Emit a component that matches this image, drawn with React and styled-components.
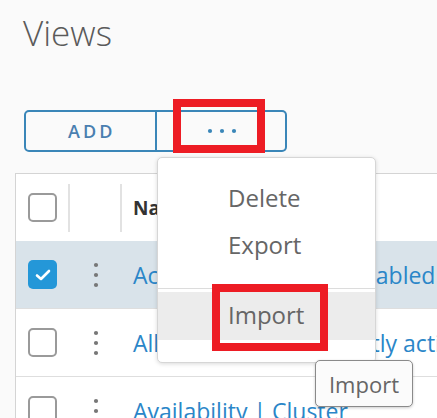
import React from 'react'
import styled, { createGlobalStyle } from 'styled-components'

const GlobalStyle = createGlobalStyle`
  html, body {
    margin: 0;
    padding: 0;
    background: #fafafa;
    overflow: hidden;
  }
  body {
    font-family: "Open Sans", "Liberation Sans", sans-serif;
  }
`

const rows = [
  { name: 'Accounts | Login is Disabled', selected: true },
  { name: 'All Datastores | Recently active', selected: false },
  { name: 'Availability | Cluster', selected: false },
]

const HDots = () => (
  <svg width="30" height="6" viewBox="0 0 30 6">
    <circle cx="3" cy="3" r="2.1" fill="#3a86b8" />
    <circle cx="15" cy="3" r="2.1" fill="#3a86b8" />
    <circle cx="27" cy="3" r="2.1" fill="#3a86b8" />
  </svg>
)

const VDots = () => (
  <svg width="6" height="26" viewBox="0 0 6 26">
    <circle cx="3" cy="3" r="2.1" fill="#777" />
    <circle cx="3" cy="13" r="2.1" fill="#777" />
    <circle cx="3" cy="23" r="2.1" fill="#777" />
  </svg>
)

const Check = () => (
  <svg width="16" height="12" viewBox="0 0 16 12">
    <path d="M2 6.5 L6 10 L14 2" fill="none" stroke="#fff" strokeWidth="2.6" strokeLinecap="round" strokeLinejoin="round" />
  </svg>
)

const App = () => {
  return (
    <Page>
      <GlobalStyle />
      <Title>Views</Title>
      <ButtonGroup>
        <GroupButton>ADD</GroupButton>
        <GroupButton>
          <HDots />
        </GroupButton>
      </ButtonGroup>

      <Table>
        <HeaderRow>
          <CheckCell>
            <Box />
          </CheckCell>
          <DotCell divided />
          <NameCell>
            <HeaderText>Name</HeaderText>
          </NameCell>
        </HeaderRow>
        {rows.map((r) => (
          <Row key={r.name} selected={r.selected}>
            <CheckCell>
              <Box checked={r.selected}>{r.selected && <Check />}</Box>
            </CheckCell>
            <DotCell>
              <VDots />
            </DotCell>
            <NameCell>
              <Link>{r.name}</Link>
            </NameCell>
          </Row>
        ))}
      </Table>

      <Menu>
        <MenuItem>Delete</MenuItem>
        <MenuItem>Export</MenuItem>
        <Divider />
        <MenuItem hovered>Import</MenuItem>
      </Menu>

      <Tooltip>Import</Tooltip>

      <Highlight style={{ left: 173, top: 99, width: 92, height: 54 }} />
      <Highlight style={{ left: 212, top: 284, width: 116, height: 67 }} />
    </Page>
  )
}

const Page = styled.div`
  position: relative;
  width: 437px;
  height: 418px;
  padding-left: 15px;
  box-sizing: border-box;
  overflow: hidden;
`

const Title = styled.h1`
  margin: 15px 0 0 8px;
  font-size: 35px;
  line-height: 35px;
  font-weight: 300;
  color: #5a5a5a;
`

const ButtonGroup = styled.div`
  display: flex;
  margin: 60px 0 0 9px;
  width: 263px;
  height: 42px;
`

const GroupButton = styled.button`
  flex: 1;
  display: flex;
  align-items: center;
  justify-content: center;
  background: transparent;
  border: 2px solid #3a86b8;
  font-family: "Open Sans", "Liberation Sans", sans-serif;
  font-size: 18px;
  font-weight: 600;
  letter-spacing: 3px;
  color: #4a7fb0;
  padding: 0 0 0 3px;
  &:first-child {
    border-radius: 5px 0 0 5px;
  }
  &:last-child {
    border-left: none;
    border-radius: 0 5px 5px 0;
  }
`

const Table = styled.div`
  margin-top: 21px;
  width: 700px;
  border-left: 1px solid #d4d4d4;
  border-top: 1px solid #d4d4d4;
  background: #fff;
`

const Row = styled.div`
  display: flex;
  align-items: center;
  height: 67px;
  border-bottom: 1px solid #dedede;
  background: ${(p) => (p.selected ? '#d9e3ea' : '#fff')};
`

const HeaderRow = styled(Row)`
  border-bottom: none;
`

const CheckCell = styled.div`
  width: 54px;
  height: 100%;
  display: flex;
  align-items: center;
  padding-left: 12px;
  box-sizing: border-box;
  ${HeaderRow} & {
    border-right: 2px solid #e2e2e2;
    height: 48px;
  }
`

const DotCell = styled.div`
  width: 52px;
  height: 48px;
  display: flex;
  align-items: center;
  justify-content: center;
  box-sizing: border-box;
  border-right: ${(p) => (p.divided ? '2px solid #e2e2e2' : 'none')};
`

const NameCell = styled.div`
  flex: 1;
  padding-left: 11px;
  white-space: nowrap;
`

const HeaderText = styled.span`
  font-size: 19px;
  font-weight: 700;
  color: #333;
`

const Link = styled.span`
  font-size: 23px;
  color: #2a86c8;
`

const Box = styled.div`
  width: 29px;
  height: 29px;
  box-sizing: border-box;
  border-radius: 5px;
  display: flex;
  align-items: center;
  justify-content: center;
  border: ${(p) => (p.checked ? 'none' : '2px solid #9a9a9a')};
  background: ${(p) => (p.checked ? '#2497d8' : '#fff')};
`

const Menu = styled.div`
  position: absolute;
  left: 157px;
  top: 157px;
  width: 219px;
  height: 206px;
  box-sizing: border-box;
  padding: 16px 0 0;
  background: #fff;
  border: 1px solid #d6d6d6;
  border-radius: 5px;
  box-shadow: 0 1px 4px rgba(0, 0, 0, 0.15);
`

const MenuItem = styled.div`
  height: ${(p) => (p.hovered ? '48px' : '47px')};
  display: flex;
  align-items: center;
  padding-left: 70px;
  font-size: 24px;
  color: #666;
  background: ${(p) => (p.hovered ? '#ececec' : 'transparent')};
  ${(p) => p.hovered && 'padding-bottom: 4px; box-sizing: border-box;'}
`

const Divider = styled.div`
  height: 1px;
  background: #dcdcdc;
  margin: 20px 0 3px;
`

const Tooltip = styled.div`
  position: absolute;
  left: 315px;
  top: 360px;
  width: 98px;
  height: 47px;
  box-sizing: border-box;
  display: flex;
  align-items: center;
  justify-content: center;
  background: #fbfbfb;
  border: 1.5px solid #8a8a8a;
  border-radius: 5px;
  box-shadow: 0 1px 3px rgba(0, 0, 0, 0.2);
  font-size: 22px;
  color: #666;
`

const Highlight = styled.div`
  position: absolute;
  box-sizing: border-box;
  border: 8px solid #ed1c24;
`

export default App
